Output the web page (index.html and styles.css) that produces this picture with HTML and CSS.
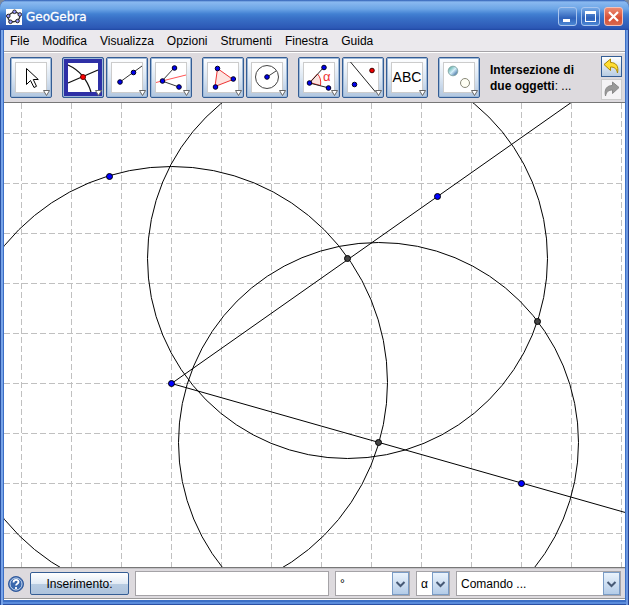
FILE: index.html
```html
<!DOCTYPE html>
<html lang="it">
<head>
<meta charset="utf-8">
<title>GeoGebra</title>
<link rel="stylesheet" href="styles.css">
</head>
<body>
<div class="window">
  <header class="titlebar">
    <svg class="logo" width="16" height="16" viewBox="0 0 16 16">
      <rect width="16" height="16" fill="#fff"/>
      <ellipse cx="8" cy="8" rx="6" ry="4.6" fill="none" stroke="#333" stroke-width="1.4" transform="rotate(-18 8 8)"/>
      <g fill="#99f" stroke="#222" stroke-width="1"><circle cx="8.500" cy="2.800" r="1.800"/><circle cx="13.800" cy="5.500" r="1.800"/><circle cx="11.500" cy="12" r="1.800"/><circle cx="4.500" cy="12.800" r="1.800"/><circle cx="2.300" cy="7" r="1.800"/></g>
    </svg>
    <h1>GeoGebra</h1>
    <div class="window-buttons">
      <button type="button" aria-label="Riduci a icona"><svg width="17" height="17"><path d="M4 11h7v3H4z" fill="#fff"/></svg></button>
      <button type="button" aria-label="Ingrandisci"><svg width="17" height="17"><path d="M3 3h11v11H3zM4 6v7h9V6z" fill="#fff" fill-rule="evenodd"/></svg></button>
      <button type="button" class="close" aria-label="Chiudi"><svg width="17" height="17"><path d="M4 4l9 9M13 4l-9 9" stroke="#fff" stroke-width="2.200"/></svg></button>
    </div>
  </header>
  <nav class="menubar">
    <a href="#">File</a><a href="#">Modifica</a><a href="#">Visualizza</a><a href="#">Opzioni</a><a href="#">Strumenti</a><a href="#">Finestra</a><a href="#">Guida</a>
  </nav>
  <div class="toolbar">
    <div class="group">
      <button type="button" class="tool" aria-label="Muovi"><svg viewBox="0 0 42 41">
        <path d="M16.500 11.500v16l4-4 3.500 7 2.500-1.200-3.200-6.800h5z" fill="#fff" stroke="#000"/>
        <path class="drop" d="M33.500 33.500h6l-3 5z"/></svg></button>
    </div>
    <div class="group">
      <button type="button" class="tool active" aria-label="Intersezione di due oggetti"><svg viewBox="0 0 42 41">
        <path d="M6 8C17 13 25 22 29 35M6 26L36 13" fill="none" stroke="#111" stroke-width="1.300"/><circle cx="21" cy="20" r="2.500" fill="#f00" stroke="#600"/>
        <path class="drop" d="M33.500 33.500h6l-3 5z"/></svg></button>
      <button type="button" class="tool" aria-label="Retta per due punti"><svg viewBox="0 0 42 41">
        <path d="M14 25L36 9" stroke="#333"/><g class="pt"><circle cx="14" cy="25" r="2.300"/><circle cx="27.500" cy="15.500" r="2.300"/></g>
        <path class="drop" d="M33.500 33.500h6l-3 5z"/></svg></button>
      <button type="button" class="tool" aria-label="Bisettrice"><svg viewBox="0 0 42 41">
        <path d="M6 25.500L36 18" stroke="#f55"/><path d="M24 11L12 24l17 6" fill="none" stroke="#333"/><g class="pt"><circle cx="24.500" cy="11" r="2.300"/><circle cx="12.500" cy="24" r="2.300"/><circle cx="29" cy="30" r="2.300"/></g>
        <path class="drop" d="M33.500 33.500h6l-3 5z"/></svg></button>
    </div>
    <div class="group">
      <button type="button" class="tool" aria-label="Poligono"><svg viewBox="0 0 42 41">
        <path d="M15.500 11.500l15.500 11-18 7z" fill="#fde4e0" stroke="#e33"/><g class="pt"><circle cx="15.500" cy="11.500" r="2.300"/><circle cx="31.300" cy="22" r="2.300"/><circle cx="13.500" cy="30" r="2.300"/></g>
        <path class="drop" d="M33.500 33.500h6l-3 5z"/></svg></button>
      <button type="button" class="tool" aria-label="Circonferenza"><svg viewBox="0 0 42 41">
        <circle cx="21" cy="20" r="11.500" fill="none" stroke="#444"/><path d="M21 20l9-6" stroke="#444"/><g class="pt"><circle cx="21" cy="20" r="2.300"/></g>
        <path class="drop" d="M33.500 33.500h6l-3 5z"/></svg></button>
    </div>
    <div class="group">
      <button type="button" class="tool" aria-label="Angolo"><svg viewBox="0 0 42 41">
        <path d="M11.500 25.500L19.500 17Q23.500 21 22.500 28.500z" fill="#fde4e0" stroke="#e33"/><path d="M26 10L11.500 26 31 31" fill="none" stroke="#222"/><g class="pt"><circle cx="26" cy="10.500" r="2.300"/><circle cx="11.500" cy="26" r="2.300"/><circle cx="30.500" cy="31" r="2.300"/></g><text x="25" y="24" class="alpha">α</text>
        <path class="drop" d="M33.500 33.500h6l-3 5z"/></svg></button>
      <button type="button" class="tool" aria-label="Simmetria assiale"><svg viewBox="0 0 42 41">
        <path d="M8.500 5l25 30" stroke="#222"/><g class="pt"><circle cx="12.500" cy="27.500" r="2.300"/></g><circle cx="30" cy="13.500" r="2.300" fill="#e00" stroke="#400"/>
        <path class="drop" d="M33.500 33.500h6l-3 5z"/></svg></button>
      <button type="button" class="tool" aria-label="Testo"><svg viewBox="0 0 42 41">
        <text x="21" y="25" class="abc">ABC</text>
        <path class="drop" d="M33.500 33.500h6l-3 5z"/></svg></button>
    </div>
    <div class="group">
      <button type="button" class="tool" aria-label="Mostra / nascondi oggetto"><svg viewBox="0 0 42 41">
        <defs><linearGradient id="ball" x1="0" y1="0" x2="1" y2="1"><stop offset="0" stop-color="#398"/><stop offset=".5" stop-color="#d4effa"/><stop offset="1" stop-color="#148"/></linearGradient></defs>
        <circle cx="15" cy="14" r="4.800" fill="url(#ball)" stroke="#8aa"/><circle cx="27" cy="26" r="4.500" fill="#fffff4" stroke="#887"/>
        <path class="drop" d="M33.500 33.500h6l-3 5z"/></svg></button>
    </div>
    <p class="hint"><b>Intersezione di</b> <b>due oggetti</b>: ...</p>
    <div class="history">
      <button type="button" class="undo" aria-label="Annulla"><svg width="19" height="19"><path d="M2 7.500L8.500 2v3.500C14 5.500 17 9 15.500 16 14.500 11.500 12.500 10 8.500 10v3.500z" fill="#fd3" stroke="#a80"/></svg></button>
      <button type="button" aria-label="Ripeti" disabled><svg width="19" height="19"><path d="M17 7.500L10.500 2v3.500C5 5.500 2 9 3.500 16 4.500 11.500 6.500 10 10.500 10v3.500z" fill="#999" stroke="#888"/></svg></button>
    </div>
  </div>
  <main class="drawing">
    <svg width="100%" height="100%" role="img" aria-label="Foglio da disegno">
      <g transform="translate(-4 -103)">
        <path class="grid" d="M21.500 103V900M71.500 103V900M121.500 103V900M171.500 103V900M221.500 103V900M271.500 103V900M321.500 103V900M371.500 103V900M421.500 103V900M471.500 103V900M521.500 103V900M571.500 103V900M621.500 103V900M4 133.500H1200M4 183.500H1200M4 233.500H1200M4 283.500H1200M4 333.500H1200M4 383.500H1200M4 433.500H1200M4 483.500H1200M4 533.500H1200"/>
        <g class="figure">
          <circle cx="171.500" cy="382.500" r="216"/>
          <circle cx="347.500" cy="258.500" r="200"/>
          <circle cx="378.500" cy="442.500" r="200"/>
          <path d="M171.500 383.500L703.500 9.500M171.500 383.500L871.500 582.500"/>
        </g>
        <g class="free"><circle cx="109.500" cy="176.500" r="3"/><circle cx="437.500" cy="196.500" r="3"/><circle cx="171.500" cy="383.500" r="3"/><circle cx="521.500" cy="483.500" r="3"/></g>
        <g class="bound"><circle cx="347.500" cy="258.500" r="3"/><circle cx="537.500" cy="321.500" r="3"/><circle cx="378.500" cy="442.500" r="3"/></g>
      </g>
    </svg>
  </main>
  <form class="inputbar">
    <button type="button" class="help" aria-label="Aiuto"><svg width="16" height="16"><circle cx="8" cy="8" r="7.500" fill="#3a68ad" stroke="#345b9c"/><circle cx="8" cy="8" r="6" fill="none" stroke="#c5d5ec"/><path d="M5.500 6.500C5.500 3 11 3.200 10.500 6.300 10.200 7.700 8 7.700 8 9.500M8 11v2" fill="none" stroke="#fff" stroke-width="1.800"/></svg></button>
    <button type="button" class="insert">Inserimento:</button>
    <input type="text" class="command-line" aria-label="Inserimento">
    <span class="combo symbol"><select aria-label="Simboli"><option>°</option></select><svg width="17" height="23"><path d="M3.500 9l4 4 4-4" /></svg></span>
    <span class="combo greek"><select aria-label="Lettere greche"><option>α</option></select><svg width="17" height="23"><path d="M3.500 9l4 4 4-4" /></svg></span>
    <span class="combo command"><select aria-label="Comando"><option>Comando ...</option></select><svg width="17" height="23"><path d="M3.500 9l4 4 4-4" /></svg></span>
  </form>
</div>
</body>
</html>
```
FILE: styles.css
```css
* { box-sizing: border-box; }
body {
  margin: 0;
  background: #7d8a9c;
  font: 12px/16px "Liberation Sans", Arial, sans-serif;
  color: #000;
}
button, input, select { font: inherit; color: inherit; margin: 0; padding: 0; }
svg { display: block; }

.window {
  display: flex;
  flex-direction: column;
  height: 100vh;
  padding: 0 4px 5px;
  border-radius: 8px 8px 0 0;
  background: #3c6fc6;
  box-shadow: inset 1px 0 #2a52a4, inset -1px 0 #2a4590, inset 3px 0 #78a4e8, inset -3px 0 #6c98e0, inset 0 -1px #2b50a4, inset 0 -3px #5b8cdc;
}

.titlebar {
  display: flex;
  align-items: center;
  gap: 4px;
  height: 30px;
  margin: 0 -4px;
  padding: 3px 6px 0;
  border-radius: 8px 8px 0 0;
  background: linear-gradient(#2c5cb4 0, #8ab9f0 2px, #6ca5e6 9px, #4280d2 14px, #3971c7 18px, #2c58b5 28px, #2048a4 30px);
}
.titlebar h1 {
  flex: 1;
  margin: 0;
  font: 12px/16px "DejaVu Sans", sans-serif;
  color: #fff;
  -webkit-text-stroke: 0.3px #fff;
}
.window-buttons { display: flex; gap: 4px; }
.window-buttons button {
  width: 19px;
  height: 19px;
  border: 1px solid #a9c5ee;
  border-radius: 3px;
  background: linear-gradient(#75a9e6, #2f62ba 60%, #4b87d4);
}
.window-buttons .close { border-color: #f3c0b8; background: linear-gradient(#ec8a72, #d74f35 60%, #d8694f); }

.menubar {
  display: flex;
  gap: 13px;
  height: 22px;
  padding: 3px 6px;
  background: #ebe9ed;
  border-bottom: 1px solid #a5a3a7;
}
.menubar a { color: #000; text-decoration: none; }

.toolbar {
  display: flex;
  align-items: center;
  gap: 10px;
  height: 51px;
  padding: 0 3px 0 6px;
  background: #dddade;
  border-top: 1px solid #fff;
  border-bottom: 1px solid #777;
}
.group { display: flex; gap: 2px; }
.tool {
  width: 42px;
  height: 41px;
  border: 1px solid #345d94;
  border-radius: 2px;
  background: linear-gradient(#fff, #fff) center / 30px 29px no-repeat, linear-gradient(#ccc, #ccc) center / 32px 31px no-repeat, linear-gradient(#fff, #dce7f3 50%, #b1c6df);
  box-shadow: inset 0 0 0 1px #9eb9d8;
}
.tool.active { background: linear-gradient(#fff, #fff) center / 30px 29px no-repeat, #2e30a6; }
.tool svg { width: 42px; height: 41px; margin: -1px; }
.pt { fill: #00e; stroke: #002; stroke-width: 1px; }
.drop { fill: #fff; stroke: #666; }
.alpha { font-size: 13px; fill: #e33; }
.abc { font-size: 14px; text-anchor: middle; }
.hint { flex: 1; max-width: 92px; margin: 0; }
.history { display: flex; flex-direction: column; gap: 2px; margin-left: auto; }
.history button {
  display: grid;
  place-items: center;
  width: 21px;
  height: 21px;
  border: 1px solid #ccc;
  background: #f4f3f5;
}
.history .undo { border-color: #345d94; background: linear-gradient(#fff, #b8cce2); }

.drawing { flex: 1; min-height: 0; background: #fff; overflow: hidden; }
.grid { stroke: #c0c0c0; stroke-dasharray: 6 3; fill: none; }
.figure { stroke: #000; fill: none; }
.free { fill: #00f; stroke: #000; }
.bound { fill: #444; stroke: #000; }

.inputbar {
  display: flex;
  align-items: center;
  gap: 6px;
  height: 33px;
  padding: 0 4px;
  background: #dddade;
  border-top: 1px solid #777;
  border-bottom: 1px solid #fff;
  box-shadow: inset 0 1px #c4c2c6, inset 0 -1px #999;
}
.help { width: 16px; height: 16px; border: 0; background: none; }
.insert {
  width: 99px;
  height: 23px;
  border: 1px solid #345d94;
  border-radius: 2px;
  background: linear-gradient(#fff, #e2ebf5 50%, #b8cce2 52%, #aec3dc);
}
.command-line { flex: 1; min-width: 0; height: 25px; border: 1px solid #a5a3a7; background: #fff; }
.combo { position: relative; height: 25px; }
.combo select {
  appearance: none;
  width: 100%;
  height: 25px;
  padding: 0 18px 0 4px;
  border: 1px solid #a5a3a7;
  border-radius: 0;
  background: #fff;
}
.combo svg {
  position: absolute;
  top: 1px;
  right: 1px;
  border: 1px solid #7a9cc6;
  background: linear-gradient(#eaf3fc, #b4cce8);
  pointer-events: none;
}
.combo path { fill: none; stroke: #475a76; stroke-width: 2px; }
.symbol { width: 75px; }
.greek { width: 34px; }
.command { width: 165px; }
```
